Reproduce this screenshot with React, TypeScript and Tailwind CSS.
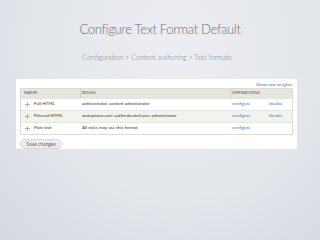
import React from 'react';

const rows = [
  { name: 'Full HTML', roles: 'administrator, content administrator', disable: true, italic: false },
  { name: 'Filtered HTML', roles: 'anonymous user, authenticated user, administrator', disable: true, italic: false },
  { name: 'Plain text', roles: 'All roles may use this format', disable: false, italic: true },
];

const Plus = () => (
  <svg width="5" height="5" viewBox="0 0 10 10" className="shrink-0">
    <path d="M5 0v10M0 5h10" stroke="#9a9a9a" strokeWidth="1.4" />
  </svg>
);

const App = () => {
  return (
    <div
      className="w-[320px] h-[240px] overflow-hidden flex flex-col items-center bg-[radial-gradient(ellipse_at_55%_20%,#eceef2_0%,#e3e6eb_55%,#d5d9e0_100%)]"
      style={{ fontFamily: 'Lato, "Open Sans", sans-serif' }}
    >
      <h1 className="mt-[21px] h-[17px] text-[13px] leading-[17px] font-light text-[#6e7077] tracking-[-0.3px]">
        Configure Text Format Default
      </h1>
      <div className="mt-[14px] ml-[-6px] h-[10px] text-[7px] leading-[10px] text-[#7c7e84] font-light">
        Configuration &gt; Content authoring &gt; Text formats
      </div>
      <div className="mt-[17px] ml-[-7px] w-[281px] h-[70px] bg-white flex flex-col px-[4px] pt-[2px]">
        <div className="h-[7px] flex justify-end pr-[1px] text-[4.5px] leading-[7px] text-[#3b7fc4]">
          Show row weights
        </div>
        <div className="border border-[#dcdcd6] text-[4.5px] text-[#333]">
          <div className="h-[9px] flex items-center bg-[#e6e6e0] text-[#555] uppercase">
            <div className="w-[59px] pl-[3px]">Name</div>
            <div className="w-[150px] pl-[1px] border-l border-[#d0d0ca] h-full flex items-center">Roles</div>
            <div className="flex-1 pl-[1px] border-l border-[#d0d0ca] h-full flex items-center">Operations</div>
          </div>
          {rows.map((r, i) => (
            <div
              key={r.name}
              className={`h-[12px] flex items-center border-t border-[#e6e6e0] ${i === 1 ? 'bg-[#f3f3ee]' : 'bg-white'}`}
            >
              <div className="w-[59px] pl-[4px] flex items-center gap-[4px]">
                <Plus />
                <span className={r.italic ? 'italic' : ''}>{r.name}</span>
              </div>
              <div className={`w-[150px] pl-[2px] ${r.italic ? '' : 'italic'}`}>{r.roles}</div>
              <div className="flex-1 pl-[2px] flex text-[#3b7fc4]">
                <span className="w-[37px]">configure</span>
                {r.disable && <span>disable</span>}
              </div>
            </div>
          ))}
        </div>
        <div className="mt-[4px] w-[42px] h-[10px] rounded-full bg-[#ececec] border border-[#d8d8d8] text-[5px] leading-[8px] text-[#666] flex items-center justify-center">
          Save changes
        </div>
      </div>
    </div>
  );
};

export default App;
